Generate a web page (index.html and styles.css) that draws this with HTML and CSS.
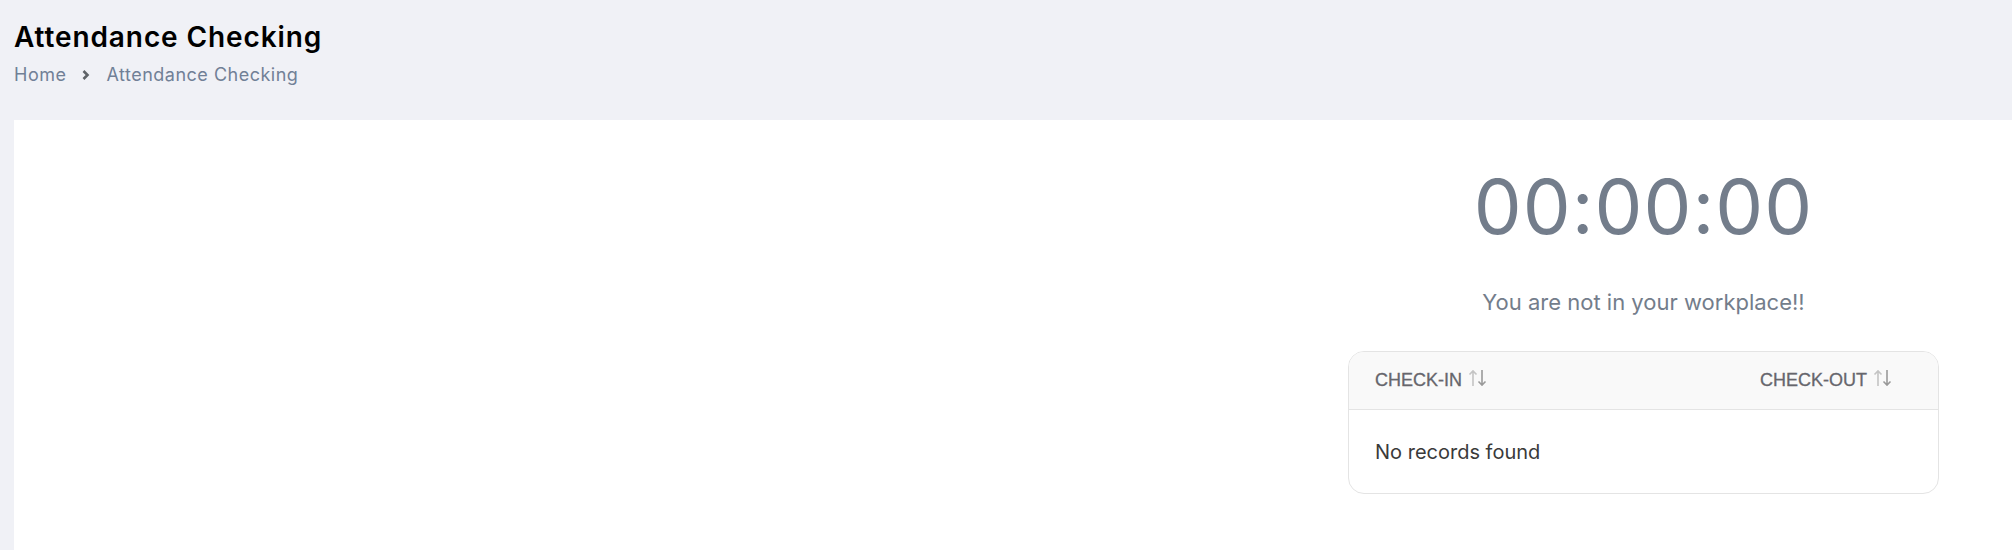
FILE: index.html
```html
<!DOCTYPE html>
<html lang="en">
<head>
  <meta charset="UTF-8">
  <title>Attendance Checking</title>
  <link rel="stylesheet" href="styles.css">
</head>
<body>

<div class="page-header">
  <h1 class="page-title">Attendance Checking</h1>
  <nav class="breadcrumb">
    <a href="#">Home</a>
    <svg class="crumb-sep" viewBox="0 0 8 10" width="8" height="10">
      <path d="M1.5 1 L5.5 5 L1.5 9" fill="none" stroke="#5f6368" stroke-width="2.6"/>
    </svg>
    <span>Attendance Checking</span>
  </nav>
</div>

<div class="card">
  <div class="map-area"></div>

  <div class="clock-panel">
    <div class="clock">00:00:00</div>
    <p class="status">You are not in your workplace!!</p>

    <div class="records">
      <div class="records-head">
        <div class="col">CHECK-IN
          <svg class="sort-icon" viewBox="0 0 20 18" width="20" height="18">
            <path d="M5 17 V2 M1.5 5.5 L5 2 L8.5 5.5" fill="none" stroke="#c4c4c4" stroke-width="1.6"/>
            <path d="M14 1 V16 M10.5 12.5 L14 16 L17.5 12.5" fill="none" stroke="#9a9a9a" stroke-width="1.6"/>
          </svg>
        </div>
        <div class="col">CHECK-OUT
          <svg class="sort-icon" viewBox="0 0 20 18" width="20" height="18">
            <path d="M5 17 V2 M1.5 5.5 L5 2 L8.5 5.5" fill="none" stroke="#c4c4c4" stroke-width="1.6"/>
            <path d="M14 1 V16 M10.5 12.5 L14 16 L17.5 12.5" fill="none" stroke="#9a9a9a" stroke-width="1.6"/>
          </svg>
        </div>
      </div>
      <div class="records-empty">No records found</div>
    </div>
  </div>
</div>

</body>
</html>
```

FILE: styles.css
```css
body {
  margin: 0;
  background: #f0f1f6;
  font-family: Inter, "Open Sans", sans-serif;
  color: #1a1a1a;
}

.page-header {
  padding: 19px 14px 0;
  height: 120px;
  box-sizing: border-box;
}

.page-title {
  margin: 0;
  font-size: 28px;
  font-weight: 600;
  line-height: 36px;
  letter-spacing: 0.9px;
  color: #000;
}

.breadcrumb {
  display: flex;
  align-items: center;
  margin-top: 9px;
  font-size: 18px;
  letter-spacing: 0.5px;
  color: #718096;
}

.breadcrumb a {
  color: #718096;
  text-decoration: none;
}

.crumb-sep {
  margin: 0 16px 0 16px;
}

.card {
  margin-left: 14px;
  background: #fff;
  min-height: 440px;
  display: grid;
  grid-template-columns: 1fr 591px;
  padding: 0 73px 0 0;
}

.clock-panel {
  display: flex;
  flex-direction: column;
  align-items: center;
  padding-top: 40px;
}

.clock {
  font-size: 76px;
  line-height: 92px;
  letter-spacing: 1px;
  color: #737d8b;
  font-weight: 400;
}

.status {
  margin: 35px 0 0;
  font-size: 22px;
  line-height: 30px;
  color: #737d8b;
}

.records {
  align-self: stretch;
  margin-top: 34px;
  border: 1px solid #e4e4e4;
  border-radius: 16px;
  overflow: hidden;
}

.records-head {
  display: flex;
  justify-content: space-between;
  height: 57px;
  align-items: center;
  padding: 0 45px 0 26px;
  background: #f9f9f9;
  border-bottom: 1px solid #e4e4e4;
  font-family: "Liberation Sans", Arial, sans-serif;
  font-size: 18px;
  color: #66666c;
  -webkit-text-stroke: 0.3px #66666c;
}

.col {
  display: flex;
  align-items: center;
}

.sort-icon {
  margin-left: 6px;
  margin-top: -6px;
}

.records-empty {
  height: 83px;
  display: flex;
  align-items: center;
  padding-left: 26px;
  font-size: 20px;
  color: #3a3a3a;
}
```
